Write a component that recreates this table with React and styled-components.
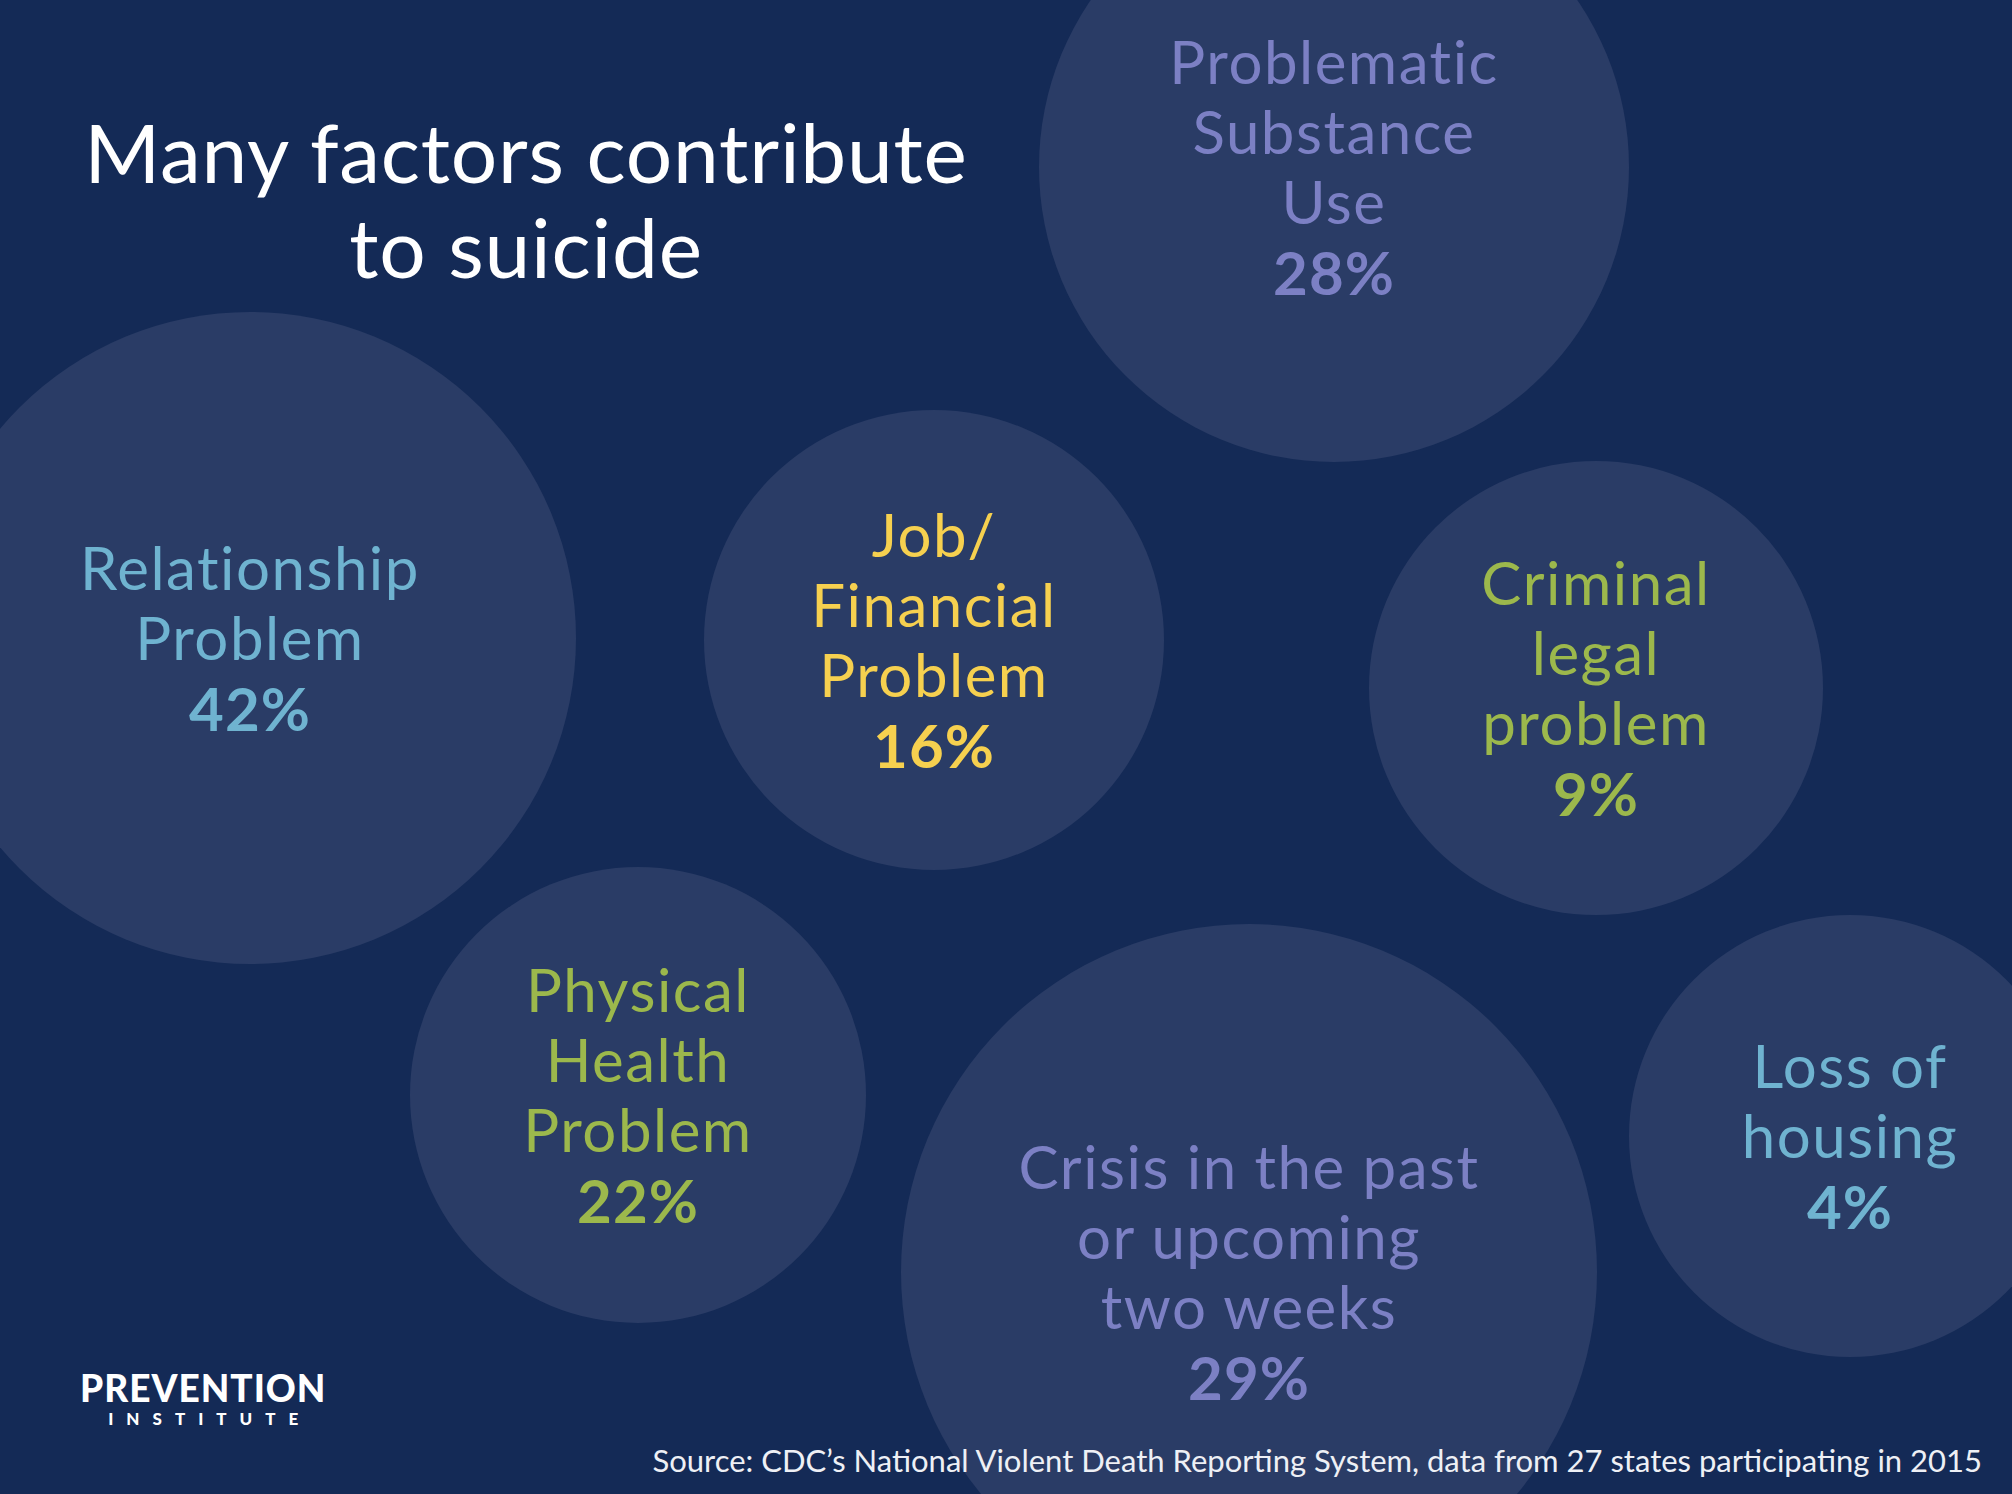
import React from "react";
import styled, { createGlobalStyle } from "styled-components";

const GlobalStyle = createGlobalStyle`
  html, body { margin: 0; padding: 0; background: #142a56; }
  body { font-family: "Lato", "Liberation Sans", sans-serif; }
  * { box-sizing: border-box; }
`;

const Slide = styled.div`
  position: relative;
  width: 100vw;
  height: 100vh;
  overflow: hidden;
  background: #142a56;
  display: flex;
  flex-direction: column;
  font-family: "Lato", "Liberation Sans", sans-serif;
`;

const Canvas = styled.div`
  position: absolute;
  inset: 0;
  z-index: 0;
`;

const Bubble = styled.div`
  position: absolute;
  left: ${(p) => p.$x - p.$r}px;
  top: ${(p) => p.$y - p.$r}px;
  width: ${(p) => p.$r * 2}px;
  height: ${(p) => p.$r * 2}px;
  border-radius: 50%;
  background: #2a3c66;
  display: flex;
  flex-direction: column;
  align-items: center;
  justify-content: center;
  color: ${(p) => p.$color};
  text-align: center;
`;

const Line = styled.span`
  display: block;
  font-size: 60px;
  line-height: 70px;
  font-weight: 400;
  letter-spacing: 1.5px;
  white-space: nowrap;
`;

const Percent = styled(Line)`
  font-weight: 700;
  line-height: 72px;
  letter-spacing: 1px;
`;

const Content = styled.div`
  position: relative;
  z-index: 1;
  flex: 1;
  display: flex;
  flex-direction: column;
  justify-content: space-between;
`;

const Title = styled.h1`
  margin: 104px 0 0 76px;
  width: 900px;
  color: #ffffff;
  font-size: 82px;
  line-height: 95px;
  font-weight: 400;
  letter-spacing: 0.8px;
  text-align: center;
`;

const Footer = styled.div`
  display: flex;
  align-items: flex-end;
  justify-content: space-between;
  padding: 0 30px 16px 80px;
`;

const Logo = styled.div`
  display: flex;
  flex-direction: column;
  align-items: center;
  margin-bottom: 50px;
  color: #ffffff;
`;

const LogoMain = styled.span`
  font-size: 37px;
  line-height: 37px;
  font-weight: 900;
  letter-spacing: 1px;
`;

const LogoSub = styled.span`
  margin-top: 4px;
  font-size: 17px;
  line-height: 18px;
  font-weight: 900;
  letter-spacing: 13px;
  margin-right: -13px;
`;

const Source = styled.p`
  margin: 0;
  color: #eef0f5;
  font-size: 31px;
  line-height: 36px;
  white-space: nowrap;
`;

const bubbles = [
  { x: 1334, y: 167, r: 295, color: "#7c80c4", lines: ["Problematic", "Substance", "Use"], pct: "28%" },
  { x: 250, y: 638, r: 326, color: "#6fb3d0", lines: ["Relationship", "Problem"], pct: "42%" },
  { x: 934, y: 640, r: 230, color: "#f6d04f", lines: ["Job/", "Financial", "Problem"], pct: "16%" },
  { x: 1596, y: 688, r: 227, color: "#9cb84c", lines: ["Criminal", "legal", "problem"], pct: "9%" },
  { x: 638, y: 1095, r: 228, color: "#9cb84c", lines: ["Physical", "Health", "Problem"], pct: "22%" },
  { x: 1249, y: 1272, r: 348, color: "#7c80c4", lines: ["Crisis in the past", "or upcoming", "two weeks"], pct: "29%" },
  { x: 1850, y: 1136, r: 221, color: "#6fb3d0", lines: ["Loss of", "housing"], pct: "4%" },
];

export default function App() {
  return (
    <>
      <GlobalStyle />
      <Slide>
        <Canvas>
          {bubbles.map((b) => (
            <Bubble key={b.pct} $x={b.x} $y={b.y} $r={b.r} $color={b.color}>
              {b.lines.map((l) => (
                <Line key={l}>{l}</Line>
              ))}
              <Percent>{b.pct}</Percent>
            </Bubble>
          ))}
        </Canvas>
        <Content>
          <Title>
            Many factors contribute
            <br />
            to suicide
          </Title>
          <Footer>
            <Logo>
              <LogoMain>PREVENTION</LogoMain>
              <LogoSub>INSTITUTE</LogoSub>
            </Logo>
            <Source>
              Source: CDC’s National Violent Death Reporting System, data from 27 states participating in 2015
            </Source>
          </Footer>
        </Content>
      </Slide>
    </>
  );
}
